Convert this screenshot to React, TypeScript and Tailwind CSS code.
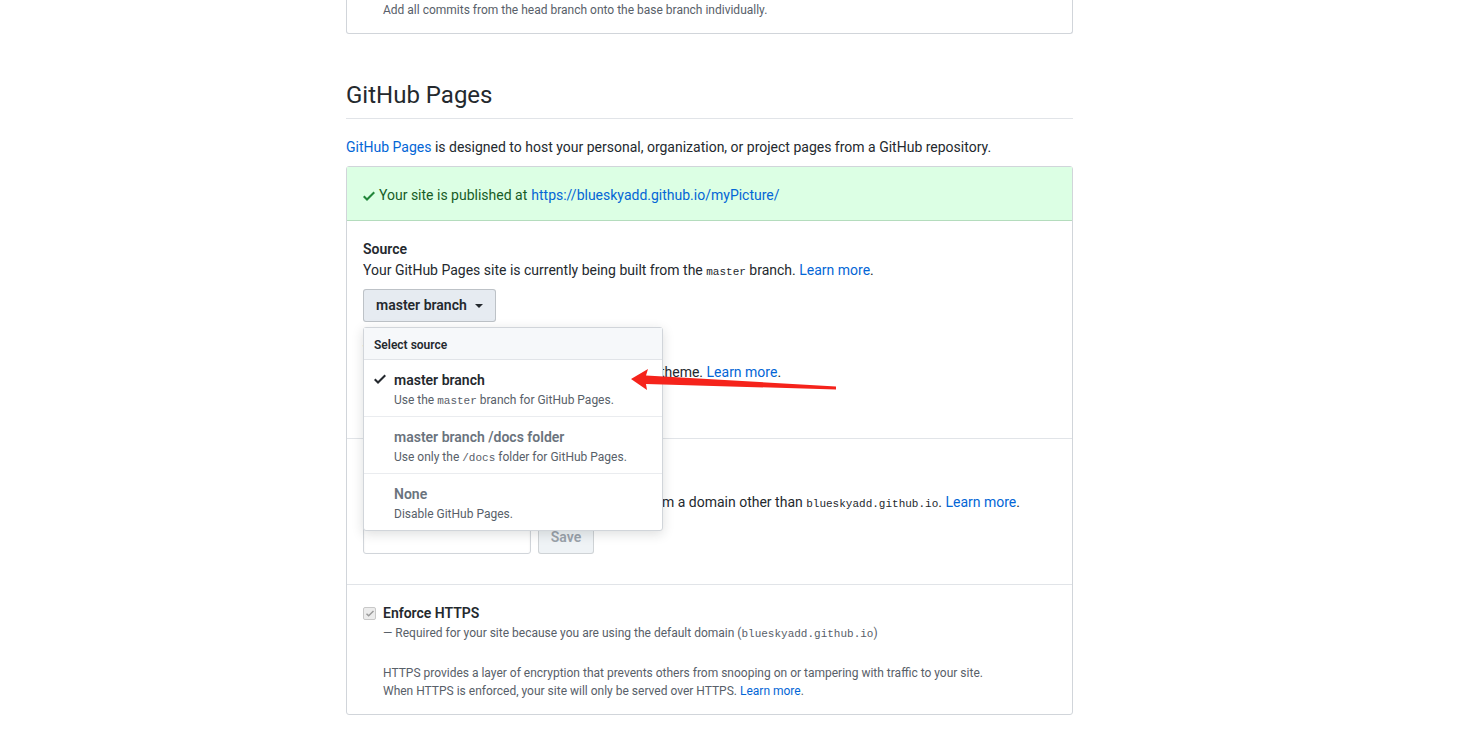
import React from "react";

const mono = "font-['Liberation_Mono',monospace] text-[11px] leading-none";

function Check({ className }: { className?: string }) {
  return (
    <svg viewBox="0 0 12 16" className={className} fill="currentColor" aria-hidden>
      <path d="M12 5l-8 8-4-4 1.5-1.5L4 10l6.5-6.5L12 5z" />
    </svg>
  );
}

function SourceMenu() {
  const items = [
    { title: "master branch", desc: <>Use the <span className={mono}>master</span> branch for GitHub Pages.</>, selected: true },
    { title: "master branch /docs folder", desc: <>Use only the <span className={mono}>/docs</span> folder for GitHub Pages.</>, selected: false },
    { title: "None", desc: <>Disable GitHub Pages.</>, selected: false },
  ];
  return (
    <div className="absolute left-0 top-[38px] z-10 w-[300px] rounded-[3px] border border-[#d1d5da] bg-white shadow-[0_3px_12px_rgba(27,31,35,0.15)]">
      <div className="border-b border-[#e1e4e8] bg-[#f6f8fa] px-[10px] pt-[8px] pb-[5px] text-[12px] leading-[18px] font-semibold text-[#24292e]">
        Select source
      </div>
      {items.map((it, i) => (
        <div
          key={it.title}
          className={`flex px-[10px] pt-[10px] pb-[7px] ${i < items.length - 1 ? "border-b border-[#eaecef]" : ""}`}
        >
          <div className="w-[20px] shrink-0 pt-[1px]">
            {it.selected && <Check className="h-[16px] w-[12px] text-[#24292e]" />}
          </div>
          <div>
            <div className={`text-[14px] leading-[21px] font-semibold ${it.selected ? "text-[#24292e]" : "text-[#6a737d]"}`}>
              {it.title}
            </div>
            <div className="text-[12px] leading-[18px] text-[#586069]">{it.desc}</div>
          </div>
        </div>
      ))}
    </div>
  );
}

export default function App() {
  return (
    <div className="relative min-h-screen bg-white font-['Roboto',sans-serif] text-[14px] text-[#24292e]">
      <div className="ml-[346px] w-[727px]">
        {/* tail of the previous box */}
        <div className="rounded-b-[3px] border-x border-b border-[#d1d5da] pl-[36px] pt-[1px] pb-[14px] text-[12px] leading-[18px] text-[#586069]">
          Add all commits from the head branch onto the base branch individually.
        </div>

        <h2 className="mt-[43px] border-b border-[#e1e4e8] pb-[5px] text-[24px] leading-[36px] font-normal">
          GitHub Pages
        </h2>
        <p className="mt-[18px] mb-[8px] leading-[21px]">
          <span className="text-[#0366d6]">GitHub Pages</span> is designed to host your personal, organization, or
          project pages from a GitHub repository.
        </p>

        <div className="rounded-[3px] border border-[#d1d5da]">
          <div className="flex items-center border-b border-[#b4dcbd] bg-[#dcffe4] px-[16px] pt-[18px] pb-[14px] leading-[21px] text-[#165c26]">
            <Check className="mr-[4px] h-[16px] w-[12px] text-[#22863a]" />
            Your site is published at{" "}
            <span className="ml-[4px] text-[#0366d6]">https://blueskyadd.github.io/myPicture/</span>
          </div>

          <div className="border-b border-[#e1e4e8] px-[16px] pt-[18px] pb-[15px]">
            <div className="font-semibold leading-[21px]">Source</div>
            <div className="leading-[21px]">
              Your GitHub Pages site is currently being built from the <span className={mono}>master</span> branch.{" "}
              <span className="text-[#0366d6]">Learn more</span>.
            </div>
            <div className="relative mt-[8px] w-fit">
              <button className="flex h-[33px] items-center rounded-[3px] border border-[rgba(27,31,35,0.2)] bg-[#e6ebf1] px-[12px] font-semibold text-[#24292e]">
                master branch
                <span className="ml-[8px] h-0 w-0 border-x-[4px] border-t-[4px] border-x-transparent border-t-[#24292e]" />
              </button>
              <SourceMenu />
            </div>

            <div className="mt-[19px] font-semibold leading-[21px]">Theme Chooser</div>
            <div className="leading-[21px]">
              Select a theme to publish your site with a Jekyll theme. <span className="text-[#0366d6]">Learn more</span>.
            </div>
            <button className="mt-[7px] block h-[33px] rounded-[3px] border border-[rgba(27,31,35,0.2)] bg-[#eff3f6] px-[12px] font-semibold">
              Choose a theme
            </button>
          </div>

          <div className="border-b border-[#e1e4e8] px-[16px] pt-[32px] pb-[30px]">
            <div className="font-semibold leading-[21px]">Custom domain</div>
            <div className="leading-[21px]">
              Custom domains allow you to serve your site from a domain other than{" "}
              <span className={mono}>blueskyadd.github.io</span>. <span className="text-[#0366d6]">Learn more</span>.
            </div>
            <div className="mt-[8px] flex gap-[7px]">
              <input className="h-[33px] w-[168px] rounded-[3px] border border-[#d1d5da] bg-white px-[8px] shadow-[inset_0_1px_2px_rgba(27,31,35,0.075)] outline-none" />
              <button className="h-[33px] w-[56px] rounded-[3px] border border-[rgba(27,31,35,0.15)] bg-[#eff3f6] font-semibold text-[#9aa2aa]">
                Save
              </button>
            </div>
          </div>

          <div className="px-[16px] pt-[18px] pb-[14px]">
            <div className="flex items-center">
              <span className="flex h-[13px] w-[13px] items-center justify-center rounded-[2px] border border-[#c8c8c8] bg-[#ececec]">
                <Check className="h-[11px] w-[8px] text-[#9a9a9a]" />
              </span>
              <span className="ml-[7px] font-semibold leading-[21px]">Enforce HTTPS</span>
            </div>
            <div className="pl-[20px] text-[12px] leading-[18px] text-[#586069]">
              — Required for your site because you are using the default domain (
              <span className={mono}>blueskyadd.github.io</span>)
            </div>
            <div className="mt-[22px] pl-[20px] text-[12px] leading-[18px] text-[#586069]">
              HTTPS provides a layer of encryption that prevents others from snooping on or tampering with traffic to your
              site.
              <br />
              When HTTPS is enforced, your site will only be served over HTTPS.{" "}
              <span className="text-[#0366d6]">Learn more</span>.
            </div>
          </div>
        </div>
        <div className="h-[15px]" />
      </div>

      {/* annotation arrow */}
      <svg className="pointer-events-none absolute left-0 top-0 z-20 h-[729px] w-[1469px]" viewBox="0 0 1469 729">
        <polygon
          points="631,379 648,369 646,375.5 836,386.5 836,389.5 646,384 647,390"
          fill="#f5231b"
        />
      </svg>
    </div>
  );
}
